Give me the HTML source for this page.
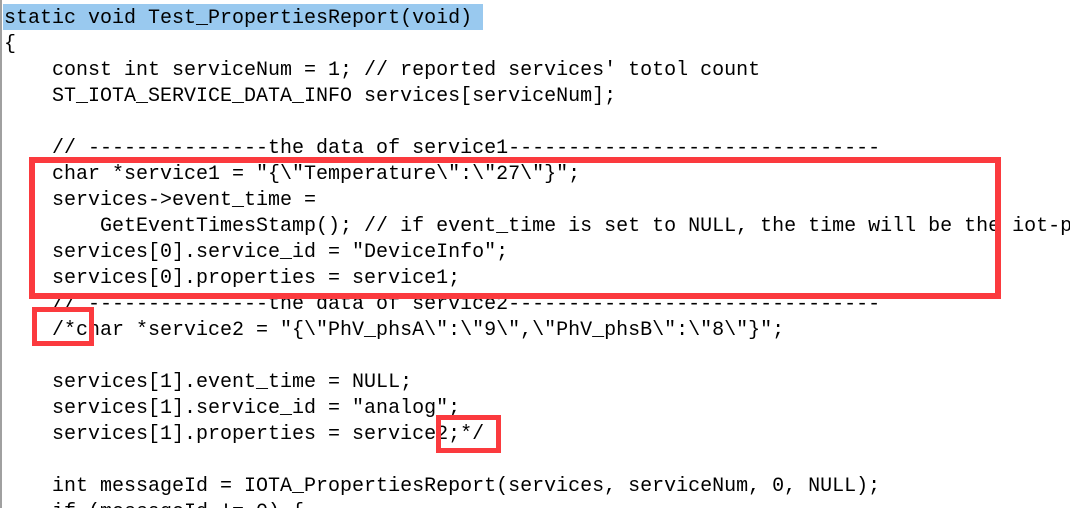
<!DOCTYPE html>
<html><head><meta charset="utf-8"><style>
html,body{margin:0;padding:0;background:#fff;width:1070px;height:508px;overflow:hidden;position:relative}
.bl{position:absolute;left:0;top:0;width:2px;height:508px;background:#a0a0a0}
pre{position:absolute;left:4px;top:6px;margin:0;font-family:"Liberation Mono",monospace;font-size:20px;line-height:26px;color:#000;white-space:pre}
.hl{position:absolute;left:3px;top:4px;width:480px;height:26px;background:#99c9ef}
.r{position:absolute;border:5px solid #fb3a3e;box-sizing:border-box}
</style></head><body>
<div class="bl"></div>
<div class="hl"></div>
<pre>static void Test_PropertiesReport(void)
{
    const int serviceNum = 1; // reported services' totol count
    ST_IOTA_SERVICE_DATA_INFO services[serviceNum];

    // ---------------the data of service1-------------------------------
    char *service1 = "{\"Temperature\":\"27\"}";
    services-&gt;event_time =
        GetEventTimesStamp(); // if event_time is set to NULL, the time will be the iot-p
    services[0].service_id = "DeviceInfo";
    services[0].properties = service1;
    // ---------------the data of service2-------------------------------
    /*char *service2 = "{\"PhV_phsA\":\"9\",\"PhV_phsB\":\"8\"}";

    services[1].event_time = NULL;
    services[1].service_id = "analog";
    services[1].properties = service2;*/

    int messageId = IOTA_PropertiesReport(services, serviceNum, 0, NULL);
    if (messageId != 0) {</pre>
<div class="r" style="left:29px;top:157px;width:972px;height:142px;border-width:6px"></div>
<div class="r" style="left:32px;top:307px;width:62px;height:39px"></div>
<div class="r" style="left:436px;top:415px;width:65px;height:38px"></div>
</body></html>
